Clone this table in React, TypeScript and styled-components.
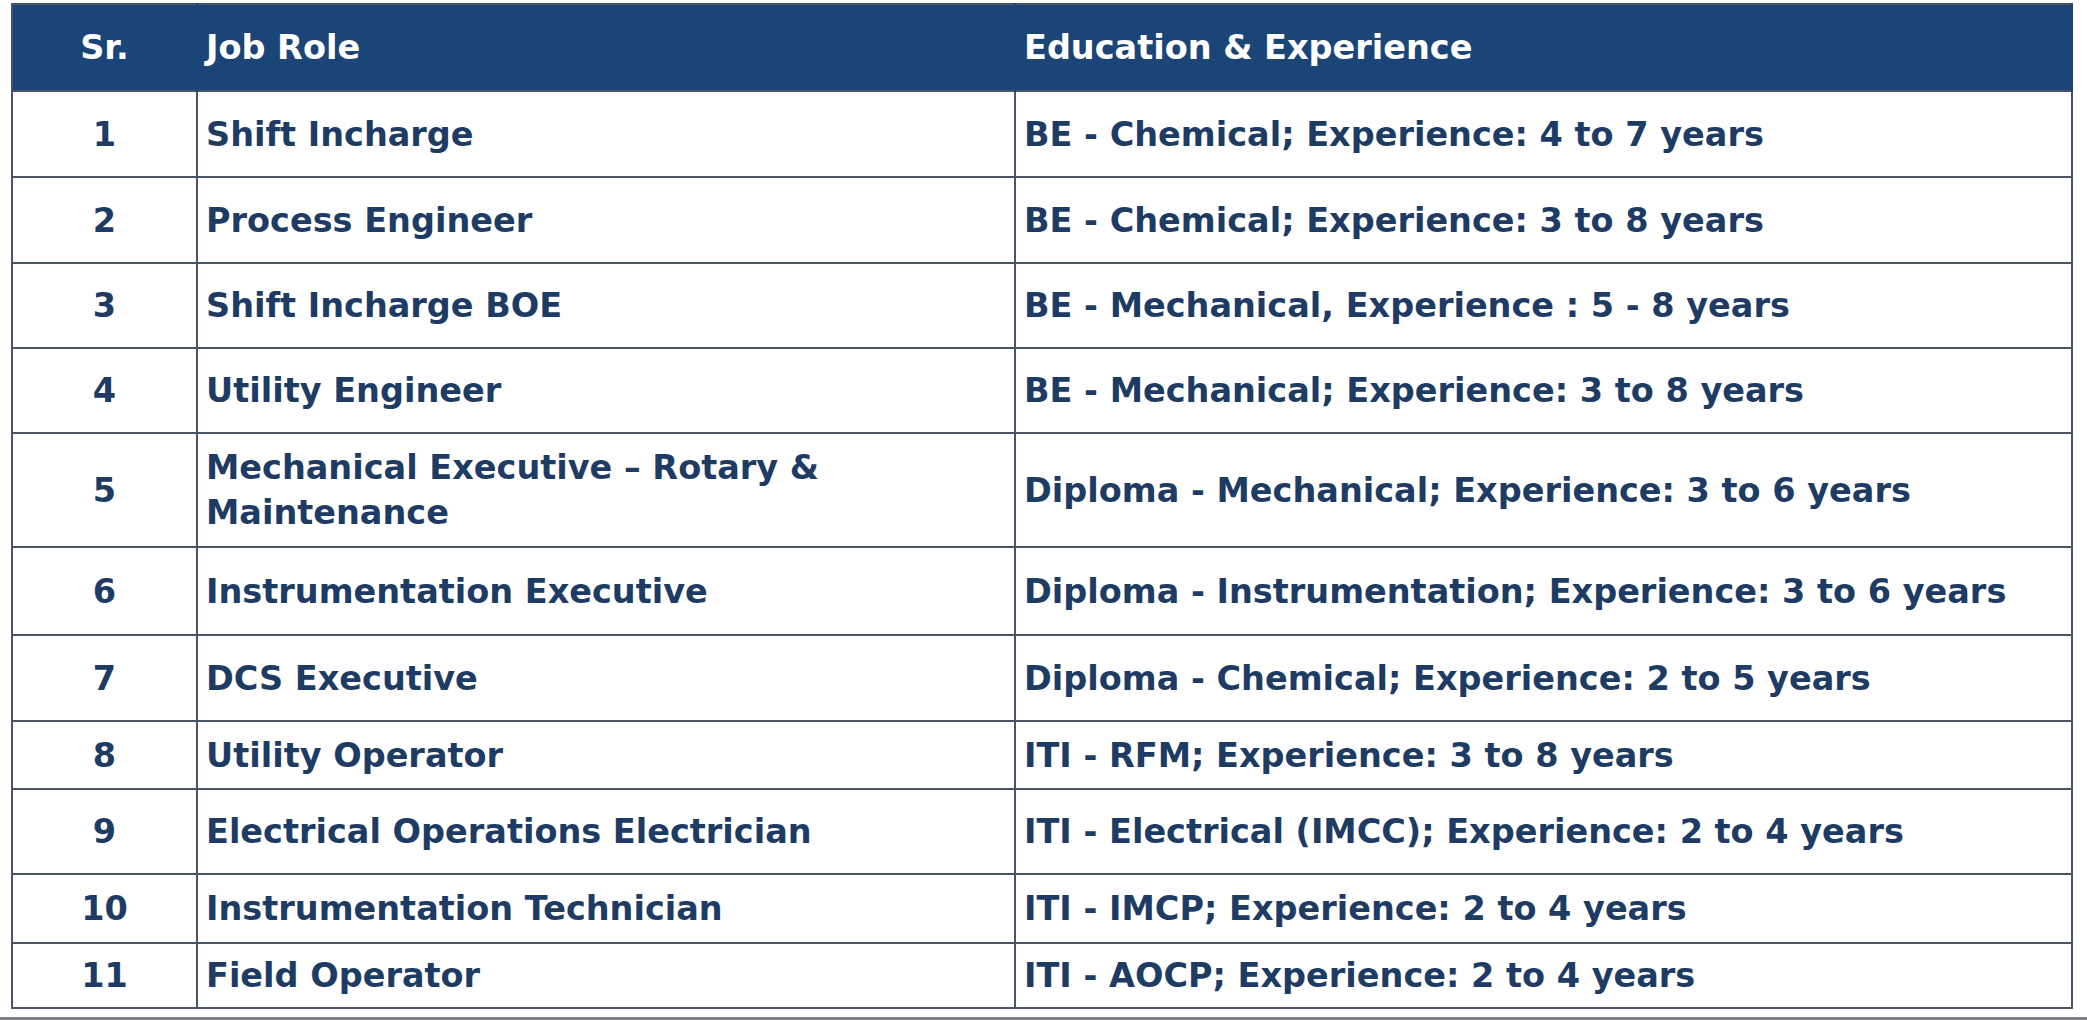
import React from 'react'
import styled, { createGlobalStyle } from 'styled-components'

const GlobalStyle = createGlobalStyle`
    html, body {
        margin: 0;
        padding: 0;
        background: #ffffff;
    }
`

type Job = {
    sr: number
    role: React.ReactNode
    education: string
    height: number
}

const jobs: Job[] = [
    { sr: 1, role: 'Shift Incharge', education: 'BE - Chemical; Experience: 4 to 7 years', height: 86 },
    { sr: 2, role: 'Process Engineer', education: 'BE - Chemical; Experience: 3 to 8 years', height: 86 },
    { sr: 3, role: 'Shift Incharge BOE', education: 'BE - Mechanical, Experience : 5 - 8 years', height: 85 },
    { sr: 4, role: 'Utility Engineer', education: 'BE - Mechanical; Experience: 3 to 8 years', height: 85 },
    {
        sr: 5,
        role: (
            <>
                Mechanical Executive – Rotary &amp;
                <br />
                Maintenance
            </>
        ),
        education: 'Diploma - Mechanical; Experience: 3 to 6 years',
        height: 114,
    },
    { sr: 6, role: 'Instrumentation Executive', education: 'Diploma - Instrumentation; Experience: 3 to 6 years', height: 88 },
    { sr: 7, role: 'DCS Executive', education: 'Diploma - Chemical; Experience: 2 to 5 years', height: 86 },
    { sr: 8, role: 'Utility Operator', education: 'ITI - RFM; Experience: 3 to 8 years', height: 68 },
    { sr: 9, role: 'Electrical Operations Electrician', education: 'ITI - Electrical (IMCC); Experience: 2 to 4 years', height: 85 },
    { sr: 10, role: 'Instrumentation Technician', education: 'ITI - IMCP; Experience: 2 to 4 years', height: 69 },
    { sr: 11, role: 'Field Operator', education: 'ITI - AOCP; Experience: 2 to 4 years', height: 65 },
]

const App = () => {
    return (
        <Page>
            <GlobalStyle />
            <JobsTable>
                <colgroup>
                    <col style={{ width: 185 }} />
                    <col style={{ width: 818 }} />
                    <col style={{ width: 1057 }} />
                </colgroup>
                <thead>
                    <tr>
                        <HeadCell $center>Sr.</HeadCell>
                        <HeadCell>Job Role</HeadCell>
                        <HeadCell>Education &amp; Experience</HeadCell>
                    </tr>
                </thead>
                <tbody>
                    {jobs.map(job => (
                        <Row key={job.sr} $height={job.height}>
                            <Cell $center>{job.sr}</Cell>
                            <Cell>{job.role}</Cell>
                            <Cell>{job.education}</Cell>
                        </Row>
                    ))}
                </tbody>
            </JobsTable>
        </Page>
    )
}

const Page = styled.div`
    box-sizing: border-box;
    height: 1020px;
    padding: 3px 0 0 11px;
    border-bottom: 3px solid #7d7f82;
    font-family: 'DejaVu Sans', Verdana, sans-serif;
`

const JobsTable = styled.table`
    width: 2060px;
    border-collapse: collapse;
    table-layout: fixed;
    border: 2px solid #4a5465;
`

const HeadCell = styled.th<{ $center?: boolean }>`
    height: 85px;
    padding: 0 8px;
    background-color: #1c4577;
    color: #ffffff;
    font-size: 33.5px;
    font-weight: 700;
    text-align: ${props => (props.$center ? 'center' : 'left')};
    border-right: 2px solid #1c4577;
`

const Row = styled.tr<{ $height: number }>`
    height: ${props => props.$height}px;
`

const Cell = styled.td<{ $center?: boolean }>`
    padding: 0 8px;
    border: 2px solid #4a5465;
    color: #1e3c63;
    font-size: 33.5px;
    font-weight: 700;
    line-height: 45px;
    text-align: ${props => (props.$center ? 'center' : 'left')};
    vertical-align: middle;
`

export default App
